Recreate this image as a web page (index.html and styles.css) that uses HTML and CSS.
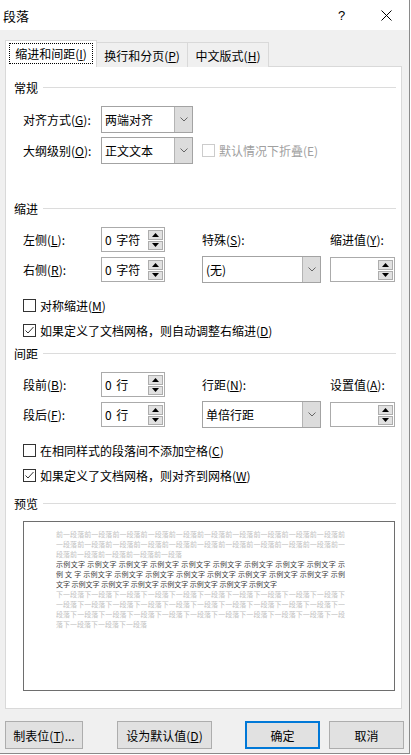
FILE: index.html
```html
<!DOCTYPE html>
<html lang="zh-CN">
<head>
<meta charset="utf-8">
<title>段落</title>
<link rel="stylesheet" href="styles.css">
</head>
<body>
<div class="window">
  <div class="titlebar">
    <span class="title">段落</span>
    <span class="tbtn help">?</span>
    <span class="tbtn close"><svg width="11" height="11" viewBox="0 0 11 11"><path d="M0.5 0.5 L10.5 10.5 M10.5 0.5 L0.5 10.5" stroke="#000" stroke-width="1" fill="none"/></svg></span>
  </div>
  <div class="body">
    <div class="tabs">
      <div class="tab active"><span class="focus">缩进和间距(<u>I</u>)</span></div>
      <div class="tab t2">换行和分页(<u>P</u>)</div>
      <div class="tab t3">中文版式(<u>H</u>)</div>
    </div>
    <div class="panel">
      <div class="sh sh-general"><span>常规</span><i class="rule"></i></div>
      <div class="row row-g1">
        <span class="label">对齐方式(<u>G</u>):</span>
        <div class="combo w92"><span class="val">两端对齐</span><span class="drop"><svg width="8" height="5" viewBox="0 0 8 5"><polyline points="0.5,0.5 4,4 7.5,0.5" fill="none" stroke="#666" stroke-width="1"/></svg></span></div>
      </div>
      <div class="row row-g2">
        <span class="label">大纲级别(<u>O</u>):</span>
        <div class="combo w92"><span class="val">正文文本</span><span class="drop"><svg width="8" height="5" viewBox="0 0 8 5"><polyline points="0.5,0.5 4,4 7.5,0.5" fill="none" stroke="#666" stroke-width="1"/></svg></span></div>
        <span class="chk disabled collapse-chk"></span>
        <span class="dis-text">默认情况下折叠(E)</span>
      </div>

      <div class="sh sh-indent"><span>缩进</span><i class="rule"></i></div>
      <div class="grid grid-indent">
        <span class="label c2">左侧(<u>L</u>):</span>
        <div class="spin c3"><span class="val">0 字符</span><span class="btns"><span class="sbtn"><svg width="7" height="4" viewBox="0 0 7 4"><polygon points="0,4 3.5,0 7,4" fill="#000"/></svg></span><span class="sbtn"><svg width="7" height="4" viewBox="0 0 7 4"><polygon points="0,0 3.5,4 7,0" fill="#000"/></svg></span></span></div>
        <span class="label c5">特殊(<u>S</u>):</span>
        <span class="label c7">缩进值(<u>Y</u>):</span>

        <span class="label c2">右侧(<u>R</u>):</span>
        <div class="spin c3"><span class="val">0 字符</span><span class="btns"><span class="sbtn"><svg width="7" height="4" viewBox="0 0 7 4"><polygon points="0,4 3.5,0 7,4" fill="#000"/></svg></span><span class="sbtn"><svg width="7" height="4" viewBox="0 0 7 4"><polygon points="0,0 3.5,4 7,0" fill="#000"/></svg></span></span></div>
        <div class="combo c5"><span class="val">(无)</span><span class="drop"><svg width="8" height="5" viewBox="0 0 8 5"><polyline points="0.5,0.5 4,4 7.5,0.5" fill="none" stroke="#666" stroke-width="1"/></svg></span></div>
        <div class="spin c7"><span class="val"></span><span class="btns"><span class="sbtn"><svg width="7" height="4" viewBox="0 0 7 4"><polygon points="0,4 3.5,0 7,4" fill="#000"/></svg></span><span class="sbtn"><svg width="7" height="4" viewBox="0 0 7 4"><polygon points="0,0 3.5,4 7,0" fill="#000"/></svg></span></span></div>
      </div>
      <div class="crow crow-first"><span class="chk"></span><span>对称缩进(<u>M</u>)</span></div>
      <div class="crow"><span class="chk"><svg width="11" height="11" viewBox="0 0 11 11"><polyline points="1.5,5.5 4,8 9.5,2" fill="none" stroke="#333" stroke-width="1"/></svg></span><span>如果定义了文档网格，则自动调整右缩进(<u>D</u>)</span></div>

      <div class="sh sh-spacing"><span>间距</span><i class="rule"></i></div>
      <div class="grid grid-spacing">
        <span class="label c2">段前(<u>B</u>):</span>
        <div class="spin c3"><span class="val">0 行</span><span class="btns"><span class="sbtn"><svg width="7" height="4" viewBox="0 0 7 4"><polygon points="0,4 3.5,0 7,4" fill="#000"/></svg></span><span class="sbtn"><svg width="7" height="4" viewBox="0 0 7 4"><polygon points="0,0 3.5,4 7,0" fill="#000"/></svg></span></span></div>
        <span class="label c5">行距(<u>N</u>):</span>
        <span class="label c7">设置值(<u>A</u>):</span>

        <span class="label c2">段后(<u>F</u>):</span>
        <div class="spin c3"><span class="val">0 行</span><span class="btns"><span class="sbtn"><svg width="7" height="4" viewBox="0 0 7 4"><polygon points="0,4 3.5,0 7,4" fill="#000"/></svg></span><span class="sbtn"><svg width="7" height="4" viewBox="0 0 7 4"><polygon points="0,0 3.5,4 7,0" fill="#000"/></svg></span></span></div>
        <div class="combo c5"><span class="val">单倍行距</span><span class="drop"><svg width="8" height="5" viewBox="0 0 8 5"><polyline points="0.5,0.5 4,4 7.5,0.5" fill="none" stroke="#666" stroke-width="1"/></svg></span></div>
        <div class="spin c7"><span class="val"></span><span class="btns"><span class="sbtn"><svg width="7" height="4" viewBox="0 0 7 4"><polygon points="0,4 3.5,0 7,4" fill="#000"/></svg></span><span class="sbtn"><svg width="7" height="4" viewBox="0 0 7 4"><polygon points="0,0 3.5,4 7,0" fill="#000"/></svg></span></span></div>
      </div>
      <div class="crow crow-first"><span class="chk"></span><span>在相同样式的段落间不添加空格(<u>C</u>)</span></div>
      <div class="crow"><span class="chk"><svg width="11" height="11" viewBox="0 0 11 11"><polyline points="1.5,5.5 4,8 9.5,2" fill="none" stroke="#333" stroke-width="1"/></svg></span><span>如果定义了文档网格，则对齐到网格(<u>W</u>)</span></div>

      <div class="sh sh-preview"><span>预览</span><i class="rule"></i></div>
      <div class="preview">
        <div class="pl prev jl">前一段落前一段落前一段落前一段落前一段落前一段落前一段落前一段落前一段落前一段落前</div>
        <div class="pl prev jl">一段落前一段落前一段落前一段落前一段落前一段落前一段落前一段落前一段落前一段落前一</div>
        <div class="pl prev">段落前一段落前一段落前一段落前一段落</div>
        <div class="pl sample jl">示例文字 示例文字 示例文字 示例文字 示例文字 示例文字 示例文字 示例文字 示例文字 示</div>
        <div class="pl sample jl">例 文 字 示例文字 示例文字 示例文字 示例文字 示例文字 示例文字 示例文字 示例文字 示例</div>
        <div class="pl sample">文字 示例文字 示例文字 示例文字 示例文字 示例文字 示例文字 示例文字</div>
        <div class="pl prev jl">下一段落下一段落下一段落下一段落下一段落下一段落下一段落下一段落下一段落下一段落下</div>
        <div class="pl prev jl">一段落下一段落下一段落下一段落下一段落下一段落下一段落下一段落下一段落下一段落下一</div>
        <div class="pl prev jl">段落下一段落下一段落下一段落下一段落下一段落下一段落下一段落下一段落下一段落下一段</div>
        <div class="pl prev">落下一段落下一段落下一段落</div>
      </div>
    </div>
    <div class="footer">
      <span class="btn b1">制表位(<u>T</u>)...</span>
      <span class="btn b2">设为默认值(<u>D</u>)</span>
      <span class="btn b3 default">确定</span>
      <span class="btn b4">取消</span>
    </div>
  </div>
</div>
</body>
</html>
```

FILE: styles.css
```css
* { box-sizing: border-box; }
html, body { margin: 0; padding: 0; background: #ffffff; }
body {
  font-family: "Noto Sans CJK SC", "Microsoft YaHei", sans-serif;
  font-size: 12px;
  color: #000;
}
u { text-decoration: underline; text-underline-offset: 1px; }

.window {
  width: 410px;
  height: 754px;
  border-right: 1px solid #8a8a8a;
  border-bottom: 1px solid #8a8a8a;
  background: #f0f0f0;
  display: flex;
  flex-direction: column;
}

.titlebar {
  height: 30px;
  flex-shrink: 0;
  background: #fff;
  display: flex;
  align-items: center;
}
.title { flex: 1; padding-left: 3px; font-size: 13px; }
.tbtn {
  width: 45px;
  height: 30px;
  display: flex;
  align-items: center;
  justify-content: center;
}
.help { font-family: "Liberation Sans", sans-serif; font-size: 13px; }

.body {
  flex: 1;
  padding: 10px 0 0 5px;
}

.tabs {
  display: flex;
  align-items: flex-end;
  height: 27px;
}
.tab {
  height: 25px;
  width: 92px;
  margin-left: -1px;
  border: 1px solid #d9d9d9;
  border-bottom: none;
  background: #f0f0f0;
  display: flex;
  align-items: center;
  justify-content: center;
  padding-top: 1px;
}
.tab.t3 { width: 82px; }
.tab.active {
  position: relative;
  z-index: 1;
  margin-left: 0;
  height: 27px;
  background: #fff;
  align-items: flex-start;
  padding-top: 2px;
}
.focus {
  display: block;
  width: 84px;
  height: 21px;
  line-height: 19px;
  border: 1px dotted #000;
  text-align: center;
}

.panel {
  margin-top: -1px;
  width: 397px;
  background: #fff;
  border: 1px solid #d9d9d9;
  padding: 0 5px 17px 8px;
}

.sh {
  display: flex;
  align-items: center;
  height: 16px;
  line-height: 16px;
}
.sh .rule {
  flex: 1;
  height: 1px;
  background: #dcdcdc;
  margin-left: 5px;
  margin-top: -2px;
}
.sh-general { margin-top: 13px; }
.sh-indent { margin-top: 37px; }
.sh-spacing { margin-top: 6px; }
.sh-preview { margin-top: 11px; }

.row {
  display: flex;
  align-items: center;
  height: 27px;
  padding-left: 9px;
}
.row-g1 { margin-top: 10px; }
.row-g2 { margin-top: 4px; }
.label { width: 78px; white-space: nowrap; }

.combo {
  display: flex;
  height: 27px;
  border: 1px solid #a3a3a3;
  background: #fff;
}
.combo.w92 { width: 92px; }
.combo .val {
  flex: 1;
  padding-left: 3px;
  display: flex;
  align-items: center;
}
.combo .drop {
  width: 18px;
  background: #dcdcdc;
  border-left: 1px solid #b4b4b4;
  display: flex;
  align-items: center;
  justify-content: center;
}

.collapse-chk { margin-left: 9px; }
.dis-text { color: #a0a0a0; margin-left: 4px; }

.grid {
  display: grid;
  grid-template-columns: 9px 78px 64px 37px 119px 9px 65px;
  grid-template-rows: 25px 27px;
  row-gap: 4px;
  align-items: center;
  margin-top: 10px;
}
.grid .label { width: auto; }
.c2 { grid-column: 2; }
.c3 { grid-column: 3; }
.c5 { grid-column: 5; }
.c7 { grid-column: 7; }

.spin {
  display: flex;
  height: 25px;
  border: 1px solid #ababab;
  background: #fff;
}
.spin .val {
  flex: 1;
  padding-left: 3px;
  display: flex;
  align-items: center;
  word-spacing: 2px;
  white-space: pre;
}
.spin .btns {
  width: 15px;
  margin: 2px 1px 1px 0;
  display: flex;
  flex-direction: column;
  gap: 1px;
}
.sbtn {
  flex: 1;
  border: 1px solid #adadad;
  background: #e1e1e1;
  display: flex;
  align-items: center;
  justify-content: center;
}

.crow {
  display: flex;
  align-items: center;
  height: 20px;
  padding-left: 9px;
  gap: 4px;
  margin-top: 5px;
}
.crow-first { margin-top: 12px; }
.chk {
  width: 13px;
  height: 13px;
  flex-shrink: 0;
  border: 1px solid #333;
  background: #fff;
  display: flex;
  align-items: center;
  justify-content: center;
}
.chk.disabled { border-color: #cccccc; }

.preview {
  margin: 9px 0 0 9px;
  width: 372px;
  height: 170px;
  border: 1px solid #6e6e6e;
  background: #fff;
  padding: 7px 0 0 32px;
}
.pl {
  width: 289px;
  height: 10px;
  line-height: 10px;
  font-size: 7px;
  overflow: hidden;
}
.pl.jl { text-align: justify; text-align-last: justify; }
.prev { color: #c2c2c2; }
.sample { color: #3c3c3c; }

.footer {
  display: flex;
  margin-top: 12px;
}
.btn {
  height: 28px;
  border: 1px solid #adadad;
  background: #e1e1e1;
  display: flex;
  align-items: center;
  justify-content: center;
}
.b1 { width: 78px; }
.b2 { width: 95px; margin-left: 34px; }
.b3 { width: 75px; margin-left: 33px; }
.b4 { width: 75px; margin-left: 9px; }
.btn.default { border: 2px solid #0078d7; }
```
